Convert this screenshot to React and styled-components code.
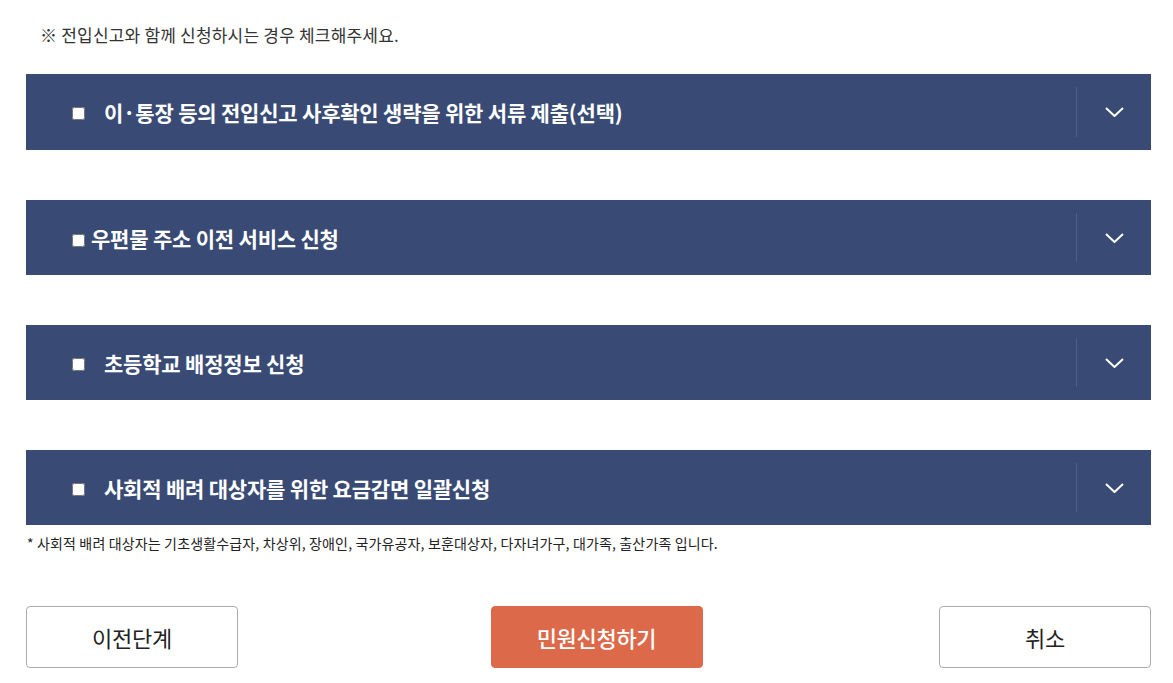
import React from "react";
import styled, { createGlobalStyle } from "styled-components";

const Global = createGlobalStyle`
  html, body { margin: 0; padding: 0; background: #fff; }
  body { font-family: "Noto Sans CJK KR", "Noto Sans", sans-serif; color: #222; }
`;

const Page = styled.div`
  width: 1173px;
  box-sizing: border-box;
  padding: 22px 22px 0 26px;
`;

const Notice = styled.p`
  margin: 0 0 26px 14px;
  font-size: 17px;
  line-height: 26px;
  letter-spacing: 0.2px;
  color: #333;
`;

const List = styled.div`
  display: flex;
  flex-direction: column;
  gap: 50px;
`;

const Panel = styled.div`
  display: flex;
  align-items: center;
  height: ${(p) => p.$h}px;
  background: #394b75;
  color: #fff;
`;

const Label = styled.label`
  flex: 1;
  display: flex;
  align-items: center;
  padding-left: 46px;
  font-size: 21px;
  font-weight: 700;
  letter-spacing: -0.2px;
  cursor: pointer;
`;

const Check = styled.input`
  width: 13px;
  height: 13px;
  margin: ${(p) => (p.$tight ? "6px" : "3px")} ${(p) => p.$gap}px 0 0;
  flex: none;
`;

const Toggle = styled.div`
  align-self: stretch;
  display: flex;
  align-items: center;
  padding: 13px 0;
`;

const Divider = styled.span`
  align-self: stretch;
  width: 1px;
  background: #4d5e88;
`;

const ChevronBox = styled.span`
  width: 74px;
  display: flex;
  justify-content: center;
  align-items: center;
`;

const Footnote = styled.p`
  margin: 8px 0 0 1px;
  font-size: 14px;
  line-height: 20px;
  letter-spacing: 0.15px;
  color: #222;
`;

const Buttons = styled.div`
  display: grid;
  grid-template-columns: 212px 1fr 212px;
  align-items: center;
  margin-top: 53px;
`;

const Btn = styled.button`
  width: 212px;
  height: 62px;
  box-sizing: border-box;
  border-radius: 4px;
  font-family: "Noto Sans CJK KR", sans-serif;
  font-size: 22px;
  letter-spacing: -0.3px;
  cursor: pointer;
  border: 1px solid ${(p) => (p.$primary ? "#dc6a4a" : "#ababab")};
  background: ${(p) => (p.$primary ? "#dc6a4a" : "#fff")};
  color: ${(p) => (p.$primary ? "#fff" : "#222")};
  font-weight: ${(p) => (p.$primary ? 500 : 400)};
  justify-self: ${(p) => p.$justify || "start"};
  margin-left: ${(p) => p.$shift || 0}px;
`;

const Chevron = () => (
  <svg width="19" height="10" viewBox="0 0 19 10" fill="none">
    <path d="M1 1 L9.5 9 L18 1" stroke="#fff" strokeWidth="2" />
  </svg>
);

const items = [
  { title: "이·통장 등의 전입신고 사후확인 생략을 위한 서류 제출(선택)", gap: 19, h: 76 },
  { title: "우편물 주소 이전 서비스 신청", gap: 6, h: 75, tight: true },
  { title: "초등학교 배정정보 신청", gap: 19, h: 75 },
  { title: "사회적 배려 대상자를 위한 요금감면 일괄신청", gap: 19, h: 75 },
];

export default function App() {
  return (
    <Page>
      <Global />
      <Notice>※ 전입신고와 함께 신청하시는 경우 체크해주세요.</Notice>
      <List>
        {items.map((it) => (
          <Panel key={it.title} $h={it.h}>
            <Label>
              <Check type="checkbox" $gap={it.gap} $tight={it.tight} />
              {it.title}
            </Label>
            <Toggle>
              <Divider />
              <ChevronBox>
                <Chevron />
              </ChevronBox>
            </Toggle>
          </Panel>
        ))}
      </List>
      <Footnote>
        * 사회적 배려 대상자는 기초생활수급자, 차상위, 장애인, 국가유공자, 보훈대상자, 다자녀가구, 대가족, 출산가족 입니다.
      </Footnote>
      <Buttons>
        <Btn>이전단계</Btn>
        <Btn $primary $justify="center" $shift={16}>민원신청하기</Btn>
        <Btn $justify="end">취소</Btn>
      </Buttons>
    </Page>
  );
}
